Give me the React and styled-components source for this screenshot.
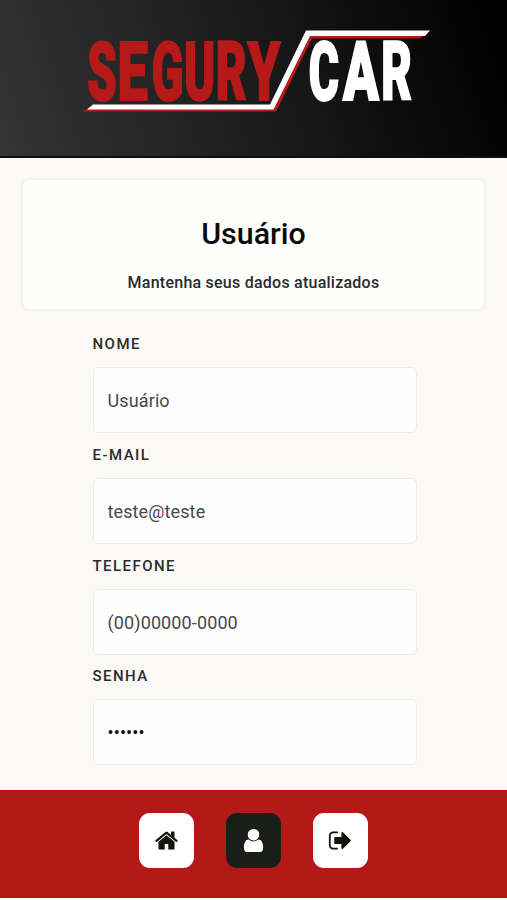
import React from 'react'
import styled, { createGlobalStyle } from 'styled-components'

const GlobalStyle = createGlobalStyle`
* {
  box-sizing: border-box;
}
body {
  margin: 0;
  background-color: #fff;
  font-family: Roboto, "Liberation Sans", sans-serif;
}
`

const Page = styled.div`
width: 100%;
height: 900px;
display: flex;
flex-direction: column;
overflow: hidden;
`

const Header = styled.header`
height: 158px;
flex-shrink: 0;
padding-top: 24px;
display: flex;
justify-content: center;
align-items: flex-start;
background: linear-gradient(72deg, #343434 0%, #1c1c1c 48%, #000 96%);
border-bottom: 2px solid #0e0e0e;
`

const LogoSvg = styled.svg`
width: 357px;
height: 96px;
display: block;
margin-left: 4px;
`

const LogoLetter = styled.text`
font-family: Roboto, "Liberation Sans", sans-serif;
font-size: 81px;
font-weight: 900;
fill: ${props => props.$color};
stroke: ${props => props.$color};
stroke-width: 2px;
`

const Main = styled.main`
flex: 1;
padding: 22px 23px 0;
display: flex;
flex-direction: column;
align-items: center;
background-color: #faf9f6;
`

const Card = styled.section`
width: 461px;
height: 129px;
padding-top: 36px;
display: flex;
flex-direction: column;
align-items: center;
background-color: #fefefd;
border-radius: 6px;
box-shadow: 0 0 2px 2px #f1f1ee;
`

const Title = styled.h1`
margin: 0;
font-size: 30.4px;
line-height: 36px;
font-weight: 500;
color: #0a0a0a;
`

const SubText = styled.p`
margin: 21px 0 0;
font-size: 16px;
line-height: 20px;
font-weight: 500;
letter-spacing: 0.24px;
color: #2b2b2b;
`

const Form = styled.form`
width: 324px;
margin: 25px 0 0 2px;
display: flex;
flex-direction: column;
`

const Field = styled.label`
height: 110.8px;
display: flex;
flex-direction: column;
`

const Label = styled.span`
height: 33px;
padding-top: 1px;
font-size: 15px;
line-height: 18px;
font-weight: 500;
letter-spacing: 1.45px;
color: #2b2b2b;
`

const Input = styled.input`
width: 100%;
height: 66px;
padding: 1px 14px 0;
border: 1px solid #ececea;
border-radius: 6px;
outline: none;
background-color: #fefefe;
font-family: inherit;
font-size: 18px;
font-weight: 400;
letter-spacing: 0.12px;
color: ${props => (props.type === 'password' ? '#111' : '#484848')};
`

const Nav = styled.nav`
height: 108px;
flex-shrink: 0;
margin-bottom: 2px;
padding-top: 23px;
display: flex;
justify-content: center;
gap: 32px;
background-color: #b11a17;
`

const NavButton = styled.button`
width: 55px;
height: 55px;
padding: 0;
border: 0;
border-radius: 11px;
display: flex;
justify-content: center;
align-items: center;
color: ${props => (props.$active ? '#fff' : '#14130f')};
background-color: ${props => (props.$active ? '#1b1e18' : '#fff')};
`

const Icon = styled.svg`
width: ${props => (props.$active ? 27 : 25)}px;
height: ${props => (props.$active ? 27 : 25)}px;
fill: currentColor;
`

const fields = [
  { label: 'NOME', value: 'Usuário', type: 'text' },
  { label: 'E-MAIL', value: 'teste@teste', type: 'text' },
  { label: 'TELEFONE', value: '(00)00000-0000', type: 'text' },
  { label: 'SENHA', value: '123456', type: 'password' },
]

const links = [
  {
    name: 'Início',
    path: 'M1472 992v480q0 26-19 45t-45 19h-384v-384h-256v384h-384q-26 0-45-19t-19-45v-480q0-1 .5-3t.5-3l575-474 575 474q1 2 1 6zm223-69l-62 74q-8 9-21 11h-3q-13 0-21-7l-692-577-692 577q-12 8-24 7-13-2-21-11l-62-74q-8-10-7-23.5t11-21.5l719-599q32-26 76-26t76 26l244 204v-195q0-14 9-23t23-9h192q14 0 23 9t9 23v408l219 182q10 8 11 21.5t-7 23.5z',
  },
  {
    name: 'Usuário',
    active: true,
    path: 'M1536 1399q0 109-62.5 187t-150.5 78h-854q-88 0-150.5-78t-62.5-187q0-85 8.5-160.5t31.5-152 58.5-131 94-89 134.5-34.5q131 128 313 128t313-128q76 0 134.5 34.5t94 89 58.5 131 31.5 152 8.5 160.5zm-256-887q0 159-112.5 271.5t-271.5 112.5-271.5-112.5-112.5-271.5 112.5-271.5 271.5-112.5 271.5 112.5 112.5 271.5z',
  },
  {
    name: 'Sair',
    path: 'M704 1440q0 4 1 20t.5 26.5-3 23.5-10 19.5-20.5 6.5h-320q-119 0-203.5-84.5t-84.5-203.5v-704q0-119 84.5-203.5t203.5-84.5h320q13 0 22.5 9.5t9.5 22.5q0 4 1 20t.5 26.5-3 23.5-10 19.5-20.5 6.5h-320q-66 0-113 47t-47 113v704q0 66 47 113t113 47h312l11.5 1 11.5 3 8 5.5 7 9 2 13.5zm928-544q0 26-19 45l-544 544q-19 19-45 19t-45-19-19-45v-288h-448q-26 0-45-19t-19-45v-384q0-26 19-45t45-19h448v-288q0-26 19-45t45-19 45 19l544 544q19 19 19 45z',
  },
]

const red = '#b51a18'

// every letter has its own width, the wordmark is nearly monospaced
const letters = [
  { char: 'S', x: 87.3, scale: 0.58, color: red },
  { char: 'E', x: 117.4, scale: 0.67, color: red },
  { char: 'G', x: 151.4, scale: 0.58, color: red },
  { char: 'U', x: 184, scale: 0.58, color: red },
  { char: 'R', x: 215.7, scale: 0.585, color: red },
  { char: 'Y', x: 247.4, scale: 0.65, color: red },
  { char: 'C', x: 308.8, scale: 0.57, color: '#fff' },
  { char: 'A', x: 343, scale: 0.65, color: '#fff' },
  { char: 'R', x: 381.3, scale: 0.58, color: '#fff' },
]

const Logo = () => {
  return (
    <LogoSvg viewBox="77 24 357 96">
      <path d="M82 111.5L89 107.5H271L305 35H425L420 38.5H312L276 111.5Z" fill={red} />
      <path d="M87 109.5L93 104.5H270L306 30.5H430L425 36H310L273.5 109.5Z" fill="#fff" />
      {letters.map(({ char, x, scale, color }) => (
        <LogoLetter key={x} $color={color} transform={`translate(${x} 100.3) scale(${scale} 1)`}>
          {char}
        </LogoLetter>
      ))}
    </LogoSvg>
  )
}

const App = () => {
  return (
    <Page>
      <GlobalStyle />
      <Header>
        <Logo />
      </Header>
      <Main>
        <Card>
          <Title>Usuário</Title>
          <SubText>Mantenha seus dados atualizados</SubText>
        </Card>
        <Form>
          {fields.map(field => (
            <Field key={field.label}>
              <Label>{field.label}</Label>
              <Input type={field.type} defaultValue={field.value} />
            </Field>
          ))}
        </Form>
      </Main>
      <Nav>
        {links.map(link => (
          <NavButton key={link.name} type="button" aria-label={link.name} $active={link.active}>
            <Icon viewBox="0 0 1792 1792" $active={link.active}>
              <path d={link.path} />
            </Icon>
          </NavButton>
        ))}
      </Nav>
    </Page>
  )
}

export default App
